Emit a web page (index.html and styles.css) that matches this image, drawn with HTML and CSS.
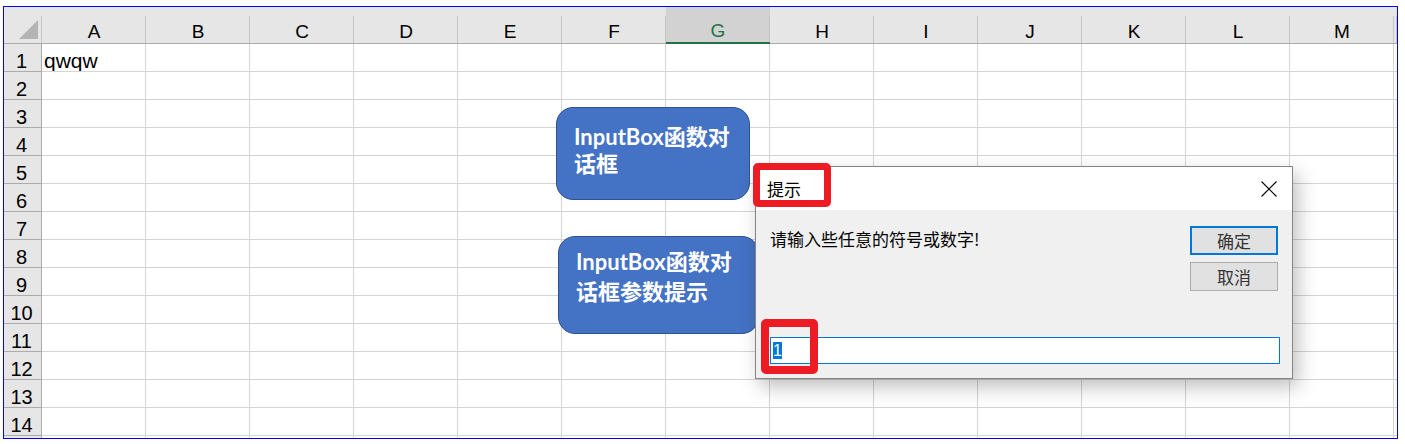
FILE: index.html
```html
<!DOCTYPE html>
<html lang="zh-CN">
  <head>
    <meta charset="UTF-8" />
    <meta name="viewport" content="width=device-width, initial-scale=1.0" />
    <title>InputBox</title>
    <link rel="stylesheet" href="styles.css">
  </head>
  <body>
    <div class="page">
      <div class="sheet">
        <div class="corner"><span class="tri"></span></div><div class="ch">A</div><div class="ch">B</div><div class="ch">C</div><div class="ch">D</div><div class="ch">E</div><div class="ch">F</div><div class="ch sel">G</div><div class="ch">H</div><div class="ch">I</div><div class="ch">J</div><div class="ch">K</div><div class="ch">L</div><div class="ch">M</div><div class="ch"></div>
        <div class="rh">1</div><div class="txt">qwqw</div><div></div><div></div><div></div><div></div><div></div><div></div><div></div><div></div><div></div><div></div><div></div><div></div><div></div>
        <div class="rh">2</div><div></div><div></div><div></div><div></div><div></div><div></div><div></div><div></div><div></div><div></div><div></div><div></div><div></div><div></div>
        <div class="rh">3</div><div></div><div></div><div></div><div></div><div></div><div></div><div></div><div></div><div></div><div></div><div></div><div></div><div></div><div></div>
        <div class="rh">4</div><div></div><div></div><div></div><div></div><div></div><div></div><div></div><div></div><div></div><div></div><div></div><div></div><div></div><div></div>
        <div class="rh">5</div><div></div><div></div><div></div><div></div><div></div><div></div><div></div><div></div><div></div><div></div><div></div><div></div><div></div><div></div>
        <div class="rh">6</div><div></div><div></div><div></div><div></div><div></div><div></div><div></div><div></div><div></div><div></div><div></div><div></div><div></div><div></div>
        <div class="rh">7</div><div></div><div></div><div></div><div></div><div></div><div></div><div></div><div></div><div></div><div></div><div></div><div></div><div></div><div></div>
        <div class="rh">8</div><div></div><div></div><div></div><div></div><div></div><div></div><div></div><div></div><div></div><div></div><div></div><div></div><div></div><div></div>
        <div class="rh">9</div><div></div><div></div><div></div><div></div><div></div><div></div><div></div><div></div><div></div><div></div><div></div><div></div><div></div><div></div>
        <div class="rh">10</div><div></div><div></div><div></div><div></div><div></div><div></div><div></div><div></div><div></div><div></div><div></div><div></div><div></div><div></div>
        <div class="rh">11</div><div></div><div></div><div></div><div></div><div></div><div></div><div></div><div></div><div></div><div></div><div></div><div></div><div></div><div></div>
        <div class="rh">12</div><div></div><div></div><div></div><div></div><div></div><div></div><div></div><div></div><div></div><div></div><div></div><div></div><div></div><div></div>
        <div class="rh">13</div><div></div><div></div><div></div><div></div><div></div><div></div><div></div><div></div><div></div><div></div><div></div><div></div><div></div><div></div>
        <div class="rh">14</div><div></div><div></div><div></div><div></div><div></div><div></div><div></div><div></div><div></div><div></div><div></div><div></div><div></div><div></div>
        <div class="rh"></div><div></div><div></div><div></div><div></div><div></div><div></div><div></div><div></div><div></div><div></div><div></div><div></div><div></div><div></div>
      </div>

      <!-- callout shapes -->
      <div class="shape shape-1">InputBox函数对<br>话框</div>
      <div class="shape shape-2">InputBox函数对<br>话框参数提示</div>

      <!-- InputBox dialog -->
      <div class="dialog">
        <div class="title-bar">
          <span class="title">提示</span>
          <svg class="close" width="16" height="16" viewBox="0 0 16 16">
            <path d="M0.5 0.5 L15.5 15.5 M15.5 0.5 L0.5 15.5" stroke="#000" stroke-width="1.1" fill="none" />
          </svg>
        </div>
        <div class="dialog-body">
          <div class="top-row">
            <div class="prompt">请输入些任意的符号或数字!</div>
            <div class="buttons">
              <div class="btn btn-ok">确定</div>
              <div class="btn">取消</div>
            </div>
          </div>
          <div class="text-input"><span class="selected">1</span></div>
        </div>
      </div>

      <div class="mark mark-title"></div>
      <div class="mark mark-input"></div>
    </div>
  </body>
</html>
```

FILE: styles.css
```css
body {
  margin: 0;
  background-color: #fff;
  font-family: "Liberation Sans", "Noto Sans CJK SC", sans-serif;
  color: #000;
}

.page {
  position: relative;
  width: 1405px;
  height: 444px;
  overflow: hidden;
}

/* spreadsheet grid */
.sheet {
  box-sizing: border-box;
  width: 1395px;
  height: 433px;
  margin: 6px 0 0 3px;
  border: 1px solid #0000ff;
  display: grid;
  grid-template-columns: 38px repeat(13, 104px) 1fr;
  grid-template-rows: 37px;
  grid-auto-rows: 28px;
  overflow: hidden;
}

.sheet > div {
  box-sizing: border-box;
  display: flex;
  align-items: flex-end;
  padding-left: 2px;
  font-size: 20px;
  line-height: 20px;
  white-space: nowrap;
  overflow: hidden;
  border-right: 1px solid #d4d4d4;
  border-bottom: 1px solid #d4d4d4;
}

.sheet > div:nth-child(15n) {
  border-right: none;
}

.sheet > .txt {
  font-size: 21px;
}

.sheet > .ch,
.sheet > .corner {
  justify-content: center;
  padding: 0 0 1px;
  font-size: 19px;
  border-right: none;
  border-bottom: 1px solid #ababab;
  background: linear-gradient(#c4c4c4, #c4c4c4) right bottom / 1px 27px no-repeat, #e6e6e6;
}

.sheet > .ch.sel {
  color: #217346;
  border-bottom: 2px solid #217346;
  background: linear-gradient(#c4c4c4, #c4c4c4) right bottom / 1px 27px no-repeat, #d2d2d2;
}

.sheet > .corner {
  justify-content: flex-end;
  padding: 0 4px 4px 0;
}

.tri {
  width: 19px;
  height: 19px;
  background-color: #b4b4b4;
  clip-path: polygon(100% 0, 100% 100%, 0 100%);
}

.sheet > .rh {
  justify-content: center;
  padding: 0 2px 0 0;
  background-color: #e6e6e6;
  border-right: 1px solid #ababab;
  border-bottom: 1px solid #ababab;
}

/* callouts */
.shape {
  position: absolute;
  box-sizing: border-box;
  background-color: #4472c4;
  border: 1.5px solid #2f528f;
  border-radius: 17px;
  color: #fff;
  font-family: Lato, "Noto Sans CJK SC", sans-serif;
  font-weight: bold;
  font-size: 22px;
  white-space: nowrap;
  padding-left: 17px;
}

.shape-1 {
  left: 556px;
  top: 107px;
  width: 194px;
  height: 93px;
  line-height: 27px;
  padding-top: 15px;
}

.shape-2 {
  left: 558px;
  top: 236px;
  width: 201px;
  height: 98px;
  line-height: 30px;
  padding-top: 10px;
}

/* dialog */
.dialog {
  position: absolute;
  left: 755px;
  top: 166px;
  width: 538px;
  height: 213px;
  box-sizing: border-box;
  border: 1px solid #858585;
  background-color: #f0f0f0;
  box-shadow: 5px 8px 18px rgba(0, 0, 0, 0.25);
  display: flex;
  flex-direction: column;
  font-family: "Noto Sans CJK SC", sans-serif;
}

.title-bar {
  height: 43px;
  flex-shrink: 0;
  background-color: #fff;
  display: flex;
  align-items: center;
  justify-content: space-between;
  padding: 0 15px 0 11px;
}

.title {
  font-size: 17px;
}

.close {
  display: block;
  margin-top: 1px;
}

.dialog-body {
  flex: 1;
  display: flex;
  flex-direction: column;
  padding: 16px 12px 14px 14px;
}

.top-row {
  display: flex;
  justify-content: space-between;
  align-items: flex-start;
}

.prompt {
  font-size: 17px;
  line-height: 26px;
}

.buttons {
  display: flex;
  flex-direction: column;
  gap: 7px;
  margin-right: 2px;
}

.btn {
  box-sizing: border-box;
  width: 88px;
  height: 29px;
  background-color: #e1e1e1;
  border: 1px solid #adadad;
  display: flex;
  align-items: center;
  justify-content: center;
  font-size: 17px;
  color: #333;
}

.btn-ok {
  border: 2px solid #0078d7;
}

.text-input {
  margin-top: auto;
  box-sizing: border-box;
  height: 27px;
  background-color: #fff;
  border: 1px solid #0078d7;
  display: flex;
  align-items: center;
  padding-left: 2px;
}

.selected {
  background-color: #0078d7;
  color: #fff;
  font-family: "Liberation Sans", sans-serif;
  font-size: 16px;
  line-height: 17px;
}

/* red highlight marks */
.mark {
  position: absolute;
  box-sizing: border-box;
  border: 7px solid #ed1c24;
  border-radius: 5px;
}

.mark-title {
  left: 753px;
  top: 163px;
  width: 78px;
  height: 44px;
}

.mark-input {
  left: 761px;
  top: 319px;
  width: 57px;
  height: 55px;
  border-width: 8px;
}
```
